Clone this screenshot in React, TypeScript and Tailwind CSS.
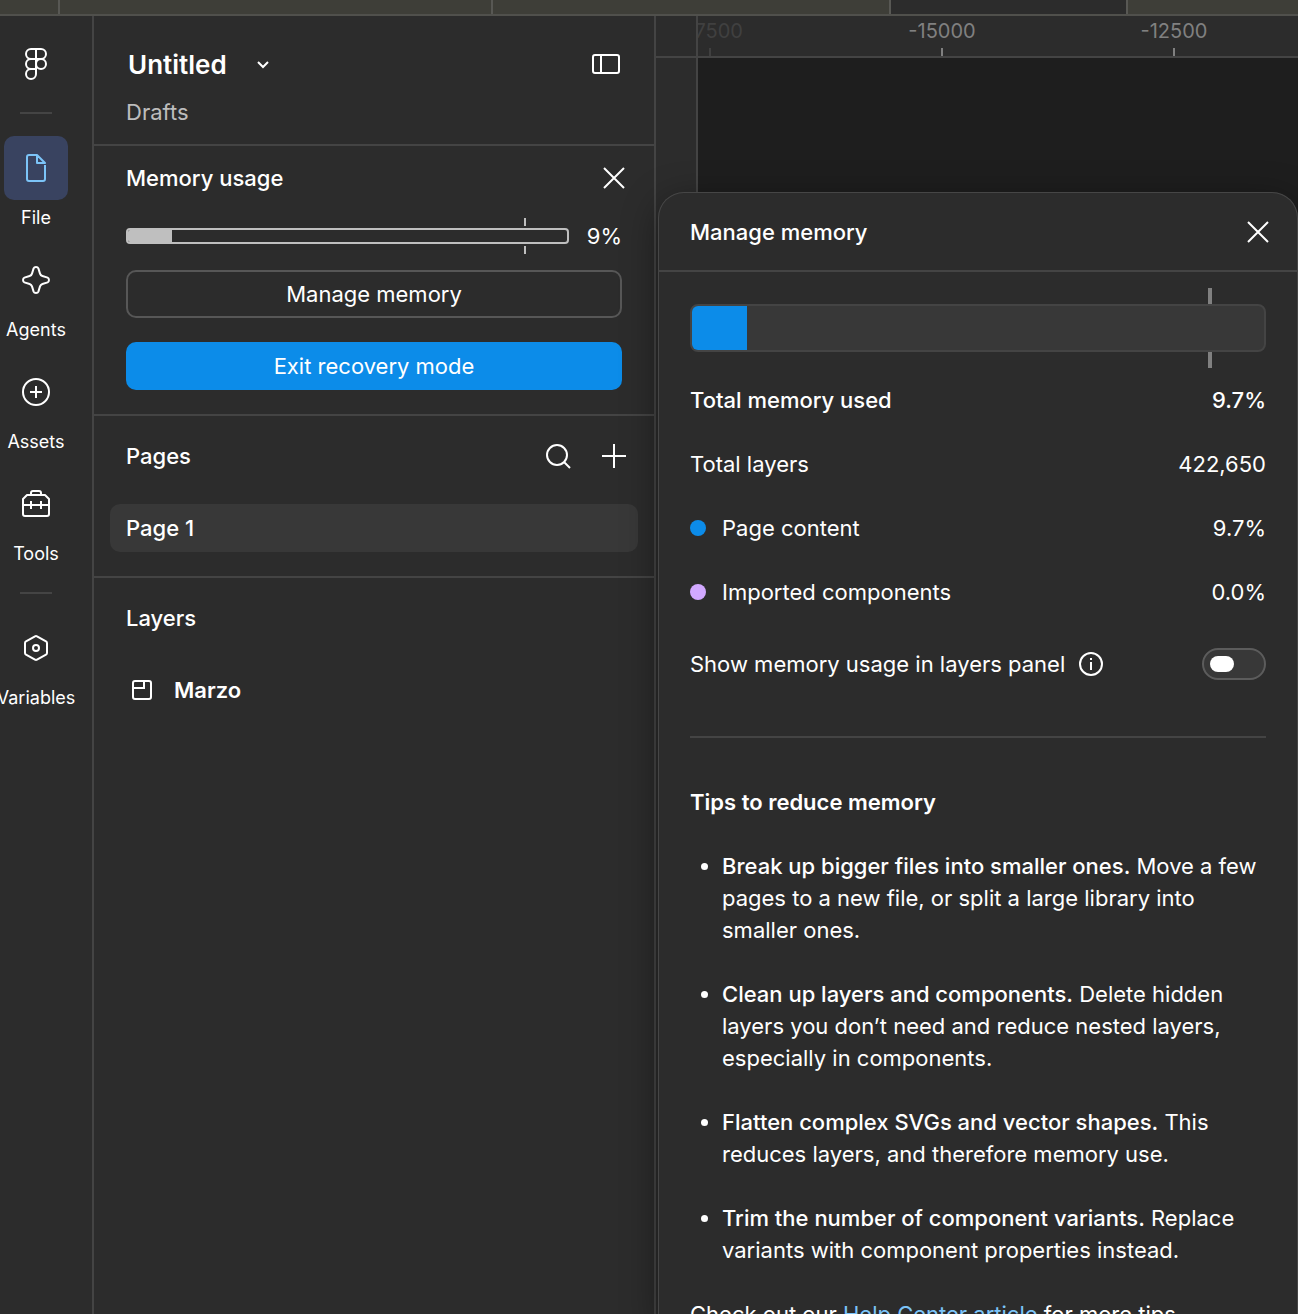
import type { ReactNode } from 'react';
import { useState } from 'react';

interface IconProps {
  children: ReactNode;
  size?: number;
}

/** Stroke icon on a grid centred at 0,0. */
function Icon({ children, size = 48 }: IconProps) {
  const half = size / 2;
  return (
    <svg
      width={size}
      height={size}
      viewBox={`${-half} ${-half} ${size} ${size}`}
      fill="none"
      stroke="currentColor"
      strokeWidth="2"
      aria-hidden="true"
      className="shrink-0"
    >
      {children}
    </svg>
  );
}

const fileIcon = (
  <Icon>
    <path d="M1-13h-8a2 2 0 0 0-2 2v22a2 2 0 0 0 2 2H7a2 2 0 0 0 2-2V-3" />
    <path d="M1-13l8 8H1z" strokeLinejoin="round" />
  </Icon>
);

const agentsIcon = (
  <Icon>
    <path
      d="M-2.4-11.6C-1.6-13.4 1.6-13.4 2.4-11.6L4-6.4C4.4-5.1 5.1-4.4 6.4-4L11.6-2.4C13.4-1.6 13.4 1.6 11.6 2.4L6.4 4C5.1 4.4 4.4 5.1 4 6.4L2.4 11.6C1.6 13.4-1.6 13.4-2.4 11.6L-4 6.4C-4.4 5.1-5.1 4.4-6.4 4L-11.6 2.4C-13.4 1.6-13.4-1.6-11.6-2.4L-6.4-4C-5.1-4.4-4.4-5.1-4-6.4Z"
    />
  </Icon>
);

const assetsIcon = (
  <Icon>
    <circle r="13" />
    <path d="M-6 0H6M0-6V6" />
  </Icon>
);

const toolsIcon = (
  <Icon>
    <path d="M-9-9H9l4 4v15a2 2 0 0 1-2 2h-22a2 2 0 0 1-2-2V-5z" strokeLinejoin="round" />
    <path d="M-5-9v-2a2 2 0 0 1 2-2H3a2 2 0 0 1 2 2v2M-13 1H13M-5-3v8M5-3v8" />
  </Icon>
);

const variablesIcon = (
  <Icon>
    <path d="M-1-11.6a2 2 0 0 1 2 0L10-6.6a2 2 0 0 1 1 1.7V4.9a2 2 0 0 1-1 1.7L1 11.6a2 2 0 0 1-2 0L-10 6.6a2 2 0 0 1-1-1.7V-4.9a2 2 0 0 1 1-1.7z" />
    <circle r="3" />
  </Icon>
);

const closeIcon = (
  <Icon>
    <path d="M-10-10L10 10M10-10L-10 10" />
  </Icon>
);

interface RailItemProps {
  label: string;
  icon: ReactNode;
  active?: boolean;
}

function RailItem({ label, icon, active }: RailItemProps) {
  return (
    <button type="button" className="flex h-28 w-16 flex-col items-center whitespace-nowrap">
      <span
        className={
          active
            ? 'flex size-16 shrink-0 items-center justify-center rounded-[10px] bg-[#394360] text-[#7cc4f8]'
            : 'flex size-16 shrink-0 items-center justify-center'
        }
      >
        {icon}
      </span>
      <span className="text-lg leading-9">{label}</span>
    </button>
  );
}

function Rail() {
  return (
    <nav className="flex w-[94px] shrink-0 flex-col items-center border-r-2 border-[#444] pt-4 pr-5">
      <button type="button" aria-label="Main menu" className="flex size-16 items-center justify-center">
        <Icon>
          <path d="M0-15h-5a5 5 0 0 0 0 10h5zM0-15h5a5 5 0 0 1 0 10h-5zM0-5h-5a5 5 0 0 0 0 10h5zM0 5h-5a5 5 0 1 0 5 5z" />
          <circle cx="5" cy="0" r="5" />
        </Icon>
      </button>
      <hr className="mt-4 mb-[22px] w-8 border-t-2 border-[#444]" />
      <RailItem label="File" icon={fileIcon} active />
      <RailItem label="Agents" icon={agentsIcon} />
      <RailItem label="Assets" icon={assetsIcon} />
      <RailItem label="Tools" icon={toolsIcon} />
      <hr className="mt-2 mb-[22px] w-8 border-t-2 border-[#444]" />
      <RailItem label="Variables" icon={variablesIcon} />
    </nav>
  );
}

function FilePanel() {
  return (
    <aside className="w-[562px] shrink-0 border-r-2 border-[#444]">
      <header className="border-b-2 border-[#444] pt-6 pr-6 pb-4 pl-8">
        <div className="flex h-12 items-center justify-between">
          <button type="button" className="flex items-center pl-0.5 text-[26px] font-semibold">
            Untitled
            <span className="ml-3">
              <Icon>
                <path d="M-5-2L0 3L5-2" />
              </Icon>
            </span>
          </button>
          <button type="button" aria-label="Minimize UI">
            <Icon>
              <rect x="-13" y="-9" width="26" height="18" rx="2" />
              <path d="M-5-9V9" />
            </Icon>
          </button>
        </div>
        <p className="mt-2 leading-8 text-white/70">Drafts</p>
      </header>

      <section className="border-b-2 border-[#444] pt-2 pb-6 pl-8">
        <div className="flex h-12 items-center justify-between pr-4">
          <h2 className="font-[550]">Memory usage</h2>
          <button type="button" aria-label="Close memory usage">
            {closeIcon}
          </button>
        </div>
        <div className="mt-4 flex h-9 items-center gap-[18px] pr-8">
          <div className="relative flex h-9 flex-1 items-center">
            <div className="h-4 w-full overflow-hidden rounded-[4px] border-2 border-[#bfbfbf]">
              <div className="h-full w-[10%] bg-[#bfbfbf]" />
            </div>
            <span className="absolute top-0 left-[90%] h-2 w-0.5 bg-[#bfbfbf]" />
            <span className="absolute bottom-0 left-[90%] h-2 w-0.5 bg-[#bfbfbf]" />
          </div>
          <span>9%</span>
        </div>
        <div className="mt-4 flex flex-col gap-6 pr-8">
          <button type="button" className="h-12 rounded-[10px] border-2 border-[#575757]">
            Manage memory
          </button>
          <button type="button" className="h-12 rounded-[10px] bg-[#0c8ce9]">
            Exit recovery mode
          </button>
        </div>
      </section>

      <section className="border-b-2 border-[#444] px-4 pt-4 pb-6">
        <div className="flex h-12 items-center pl-4">
          <h2 className="flex-1 font-[550]">Pages</h2>
          <button type="button" aria-label="Find" className="mr-2">
            <Icon>
              <circle cx="-1" cy="-1" r="10" />
              <path d="M6 6L12 12" />
            </Icon>
          </button>
          <button type="button" aria-label="Add new page">
            <Icon>
              <path d="M-12 0H12M0-12V12" />
            </Icon>
          </button>
        </div>
        <button type="button" className="mt-6 h-12 w-full rounded-[10px] bg-[#383838] px-4 text-left font-[550]">
          Page 1
        </button>
      </section>

      <section className="px-8 pt-4">
        <h2 className="leading-[48px] font-[550]">Layers</h2>
        <button type="button" className="mt-6 flex h-12 items-center gap-4 font-semibold">
          <Icon size={32}>
            <rect x="-9" y="-9" width="18" height="18" rx="2" />
            <path d="M2-9v7h-11" />
          </Icon>
          Marzo
        </button>
      </section>
    </aside>
  );
}

const rulerMarks = [
  { value: '-17500', dimmed: true },
  { value: '-15000', dimmed: false },
  { value: '-12500', dimmed: false },
];

const usageRows = [
  { label: 'Total memory used', value: '9.7%', strong: true },
  { label: 'Total layers', value: '422,650' },
  { label: 'Page content', value: '9.7%', dot: 'bg-[#0c8ce9]' },
  { label: 'Imported components', value: '0.0%', dot: 'bg-[#d1a8ff]' },
];

const tips = [
  {
    title: 'Break up bigger files into smaller ones.',
    text: 'Move a few pages to a new file, or split a large library into smaller ones.',
  },
  {
    title: 'Clean up layers and components.',
    text: 'Delete hidden layers you don’t need and reduce nested layers, especially in components.',
  },
  {
    title: 'Flatten complex SVGs and vector shapes.',
    text: 'This reduces layers, and therefore memory use.',
  },
  {
    title: 'Trim the number of component variants.',
    text: 'Replace variants with component properties instead.',
  },
];

function MemoryDialog() {
  const [showUsage, setShowUsage] = useState(false);

  return (
    <div
      role="dialog"
      aria-labelledby="memory-title"
      className="absolute top-44 right-0 -bottom-2 left-0.5 overflow-hidden rounded-t-[26px] bg-[#2c2c2c] shadow-[inset_0_0_0_1px_#464646,0_8px_36px_rgba(0,0,0,0.4)]"
    >
      <div className="flex h-20 items-center justify-between border-b-2 border-[#444] pt-0.5 pr-4 pl-8">
        <h2 id="memory-title" className="font-[550]">
          Manage memory
        </h2>
        <button type="button" aria-label="Close">
          {closeIcon}
        </button>
      </div>

      <div className="px-8 pt-4">
        <div className="relative py-4">
          <div className="h-12 overflow-hidden rounded-[8px] border-2 border-[#444] bg-[#383838]">
            <div className="h-full w-[9.7%] bg-[#0c8ce9]" />
          </div>
          <span className="absolute top-0 left-[90%] h-4 w-1 bg-[#808080]" />
          <span className="absolute bottom-0 left-[90%] h-4 w-1 bg-[#808080]" />
        </div>

        <dl>
          {usageRows.map((row) => (
            <div
              key={row.label}
              className={row.strong ? 'flex h-16 items-center justify-between font-[550]' : 'flex h-16 items-center justify-between'}
            >
              <dt className="flex items-center gap-4">
                {row.dot && <span className={`size-4 rounded-full ${row.dot}`} />}
                {row.label}
              </dt>
              <dd>{row.value}</dd>
            </div>
          ))}
        </dl>

        <div className="mt-6 flex h-8 items-center">
          <label htmlFor="show-usage">Show memory usage in layers panel</label>
          <span className="ml-2.5 flex-1">
            <Icon size={32}>
              <circle r="11" />
              <path d="M0-2V6M0-6v2" />
            </Icon>
          </span>
          <input
            id="show-usage"
            type="checkbox"
            role="switch"
            checked={showUsage}
            onChange={(e) => setShowUsage(e.target.checked)}
            className="h-8 w-16 appearance-none rounded-full border-2 border-[#5c5c5c] bg-[#383838] px-1.5 py-1.5 before:block before:h-4 before:w-6 before:rounded-full before:bg-white checked:before:ml-auto"
          />
        </div>

        <hr className="mt-14 border-t-2 border-[#444]" />

        <h3 className="mt-12 leading-8 font-semibold">Tips to reduce memory</h3>
        <ul className="my-8 flex list-disc flex-col gap-8 pl-8 leading-8">
          {tips.map((tip) => (
            <li key={tip.title}>
              <strong className="font-[550]">{tip.title}</strong> {tip.text}
            </li>
          ))}
        </ul>
        <p className="leading-8">
          Check out our{' '}
          <a href="#help" className="text-[#7cc4f8]">
            Help Center article
          </a>{' '}
          for more tips.
        </p>
      </div>
    </div>
  );
}

function Canvas() {
  return (
    <main className="relative flex min-w-0 flex-1 flex-col bg-[#1e1e1e]">
      <div className="flex h-[42px] shrink-0 border-b-2 border-[#444] bg-[#2c2c2c]">
        <div className="w-[42px] shrink-0 border-r-2 border-[#444]" />
        <div className="min-w-0 flex-1 overflow-hidden">
          <div className="-ml-[104px] flex">
            {rulerMarks.map((mark) => (
              <div
                key={mark.value}
                className={
                  mark.dimmed
                    ? 'flex w-[232px] shrink-0 flex-col items-center gap-0.5 text-xl leading-[30px] text-[#404040]'
                    : 'flex w-[232px] shrink-0 flex-col items-center gap-0.5 text-xl leading-[30px] text-[#808080]'
                }
              >
                {mark.value}
                <span className="h-2 w-0.5 bg-current" />
              </div>
            ))}
          </div>
        </div>
      </div>
      <div className="w-[42px] flex-1 border-r-2 border-[#444] bg-[#2c2c2c]" />
      <MemoryDialog />
    </main>
  );
}

export default function App() {
  return (
    <div className="flex h-screen flex-col overflow-hidden bg-[#2c2c2c] font-['Inter',sans-serif] text-[22px] text-white">
      <div className="flex h-4 shrink-0 border-b-2 border-[#50504c]">
        <div className="w-[60px] border-r-2 border-[#585854] bg-[#3e3e38]" />
        <div className="w-[433px] border-r-2 border-[#585854] bg-[#3e3e38]" />
        <div className="w-[398px] border-r-2 border-[#585854] bg-[#3e3e38]" />
        <div className="w-[237px] border-r-2 border-[#585854]" />
        <div className="flex-1 bg-[#3e3e38]" />
      </div>
      <div className="flex min-h-0 flex-1">
        <Rail />
        <FilePanel />
        <Canvas />
      </div>
    </div>
  );
}
